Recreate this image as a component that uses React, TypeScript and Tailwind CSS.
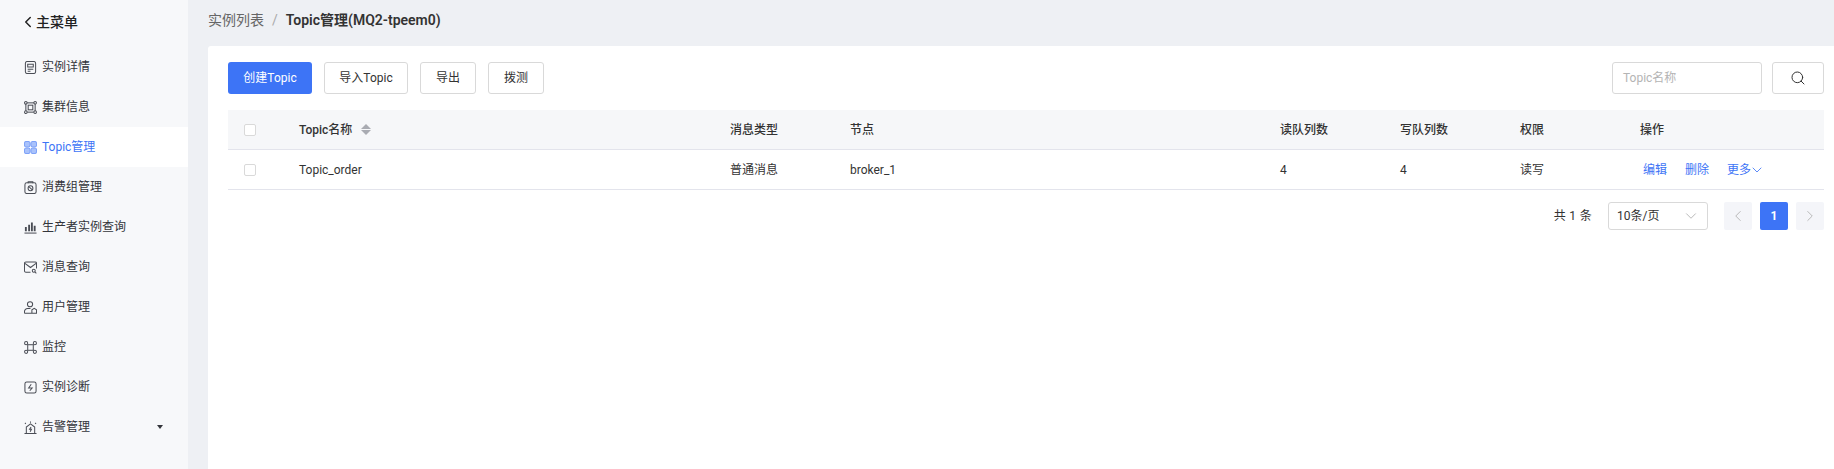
import { ChevronLeft, ChevronRight, ChevronDown, Search } from 'lucide-react';
import type { ReactNode } from 'react';

const FONT = "font-['Roboto','Noto_Sans_CJK_SC',sans-serif]";

function Ico({ children, color = '#4a4d55' }: { children: ReactNode; color?: string }) {
  return (
    <svg width="13" height="13" viewBox="0 0 14 14" fill="none" stroke={color} strokeWidth="1.1" className="shrink-0">
      {children}
    </svg>
  );
}

const menu: { label: string; icon: ReactNode; active?: boolean; caret?: boolean }[] = [
  {
    label: '实例详情',
    icon: (
      <Ico>
        <rect x="1.5" y="0.5" width="11" height="13" rx="2" />
        <path d="M4 3.500h6v3H4zM4 9h6M4 11h3" />
      </Ico>
    ),
  },
  {
    label: '集群信息',
    icon: (
      <Ico>
        <rect x="2" y="2" width="10" height="10" />
        <rect x="4.500" y="4.500" width="5" height="5" />
        <circle cx="2" cy="2" r="1.400" fill="#f7f8fa" />
        <circle cx="12" cy="2" r="1.400" fill="#f7f8fa" />
        <circle cx="2" cy="12" r="1.400" fill="#f7f8fa" />
        <circle cx="12" cy="12" r="1.400" fill="#f7f8fa" />
      </Ico>
    ),
  },
  {
    label: 'Topic管理',
    active: true,
    icon: (
      <Ico color="#7ea2f8">
        <rect x="0.5" y="0.5" width="6" height="6" rx="2" fill="#a9c2fb" />
        <rect x="7.5" y="0.5" width="6" height="6" rx="2" fill="#a9c2fb" />
        <rect x="0.5" y="7.5" width="6" height="6" rx="2" fill="#a9c2fb" />
        <rect x="7.5" y="7.5" width="6" height="6" rx="2" fill="#a9c2fb" />
      </Ico>
    ),
  },
  {
    label: '消费组管理',
    icon: (
      <Ico>
        <rect x="1" y="2" width="12" height="11.500" rx="2" />
        <path d="M4.500 2.500V.8h5v1.700" />
        <circle cx="7" cy="7.800" r="2.600" />
        <path d="M5.400 6.200l3.200 3.200" />
      </Ico>
    ),
  },
  {
    label: '生产者实例查询',
    icon: (
      <Ico>
        <path d="M0.500 13h13" />
        <path d="M2 11V6.500M5.500 11V4M8.500 11V1.500M11.500 11V5" strokeWidth="2" />
      </Ico>
    ),
  },
  {
    label: '消息查询',
    icon: (
      <Ico>
        <path d="M7 12H2a1.500 1.500 0 0 1-1.500-1.500v-8A1.500 1.500 0 0 1 2 1h10a1.500 1.500 0 0 1 1.500 1.500V8" />
        <path d="M1 2.500L7 7l6-4.500" />
        <circle cx="10.500" cy="10.500" r="1.600" />
        <path d="M11.700 11.700l1.600 1.600" />
      </Ico>
    ),
  },
  {
    label: '用户管理',
    icon: (
      <Ico>
        <circle cx="6.500" cy="3.500" r="2.800" />
        <path d="M0.500 13.200v-1.700a3.500 3.500 0 0 1 3.500-3.500h3" />
        <path d="M0.500 13.200h13V9.500l-2.500-1.700-2.500 1.700v3.700" />
      </Ico>
    ),
  },
  {
    label: '监控',
    icon: (
      <Ico>
        <rect x="4" y="4" width="6" height="6" />
        <circle cx="2.300" cy="2.300" r="1.700" />
        <circle cx="11.700" cy="2.300" r="1.700" />
        <circle cx="2.300" cy="11.700" r="1.700" />
        <circle cx="11.700" cy="11.700" r="1.700" />
      </Ico>
    ),
  },
  {
    label: '实例诊断',
    icon: (
      <Ico>
        <rect x="1" y="1" width="12" height="12" rx="2" />
        <path d="M7.800 3.500L5 7.500h3.800L6.200 10.500" />
      </Ico>
    ),
  },
  {
    label: '告警管理',
    caret: true,
    icon: (
      <Ico>
        <path d="M0.500 13.500h13" />
        <path d="M2.500 13V6.500L7 3l4.500 3.500V13" />
        <path d="M7 .5V2M1 2l1 1M13 2l-1 1" />
        <path d="M7.600 6.500L6 9h2l-1.400 2.500" />
      </Ico>
    ),
  },
];

function Btn({ children, className }: { children: ReactNode; className: string }) {
  return (
    <button className={`h-8 rounded-[3px] border border-[#d9d9d9] bg-white text-xs text-[#333] ${className}`}>
      {children}
    </button>
  );
}

export default function App() {
  return (
    <div className={`flex h-[469px] w-[1834px] overflow-hidden bg-[#eef0f4] ${FONT}`}>
      {/* Sidebar */}
      <aside className="w-[188px] shrink-0 bg-[#f7f8fa] text-xs text-[#33353b]">
        <div className="flex h-[47px] items-center pb-[3px] pl-5 text-sm font-medium text-[#222]">
          <ChevronLeft size={18} strokeWidth={2} className="-ml-px mr-[-1px]" />
          <span>主菜单</span>
        </div>
        {menu.map((item) => (
          <div
            key={item.label}
            className={`flex h-10 items-center gap-[5px] pl-6 ${item.active ? 'bg-white text-[#3d74f6]' : ''}`}
          >
            {item.icon}
            <span>{item.label}</span>
            {item.caret && (
              <span className="ml-auto mr-[25px] h-0 w-0 border-x-[3.500px] border-t-[4px] border-x-transparent border-t-[#33353b]" />
            )}
          </div>
        ))}
      </aside>

      {/* Main */}
      <main className="flex min-w-0 flex-1 flex-col pl-5">
        <div className="flex h-[46px] shrink-0 items-center pb-[7px] text-sm">
          <span className="text-[#666]">实例列表</span>
          <span className="mx-2 text-[#aaa]">/</span>
          <span className="font-semibold text-[#333]">Topic管理(MQ2-tpeem0)</span>
        </div>

        <div className="flex-1 rounded-tl-[3px] bg-white pl-5 pr-2.5 pt-4">
          {/* Toolbar */}
          <div className="flex items-center gap-3">
            <button className="h-8 w-[84px] rounded-[3px] bg-[#3d74f6] text-xs text-white">创建Topic</button>
            <Btn className="w-[84px]">导入Topic</Btn>
            <Btn className="w-14">导出</Btn>
            <Btn className="w-14">拨测</Btn>
            <div className="ml-auto flex h-8 w-[150px] items-center rounded-[3px] border border-[#d9d9d9] px-[10px] text-xs text-[#b4b4b4]">
              Topic名称
            </div>
            <div className="-ml-0.5 flex h-8 w-[52px] items-center justify-center rounded-[3px] border border-[#d9d9d9]">
              <Search size={16} strokeWidth={1.500} className="text-[#333]" />
            </div>
          </div>

          {/* Table */}
          <table className="mt-4 w-full table-fixed border-separate border-spacing-0 text-xs text-[#333]">
            <colgroup>
              <col className="w-[71px]" />
              <col className="w-[431px]" />
              <col className="w-[120px]" />
              <col className="w-[430px]" />
              <col className="w-[120px]" />
              <col className="w-[120px]" />
              <col className="w-[120px]" />
              <col />
            </colgroup>
            <thead>
              <tr className="h-10 bg-[#f6f7f9] text-left [&>th]:border-b [&>th]:border-[#e3e4ec] [&>th]:font-medium">
                <th className="pl-4">
                  <span className="block h-3 w-3 rounded-[2px] border border-[#d9d9d9] bg-white" />
                </th>
                <th>
                  <span className="flex items-center gap-[9px]">
                    Topic名称
                    <span className="flex flex-col gap-[1px]">
                      <span className="h-0 w-0 border-x-[5px] border-b-[5px] border-x-transparent border-b-[#a9abb2]" />
                      <span className="h-0 w-0 border-x-[5px] border-t-[5px] border-x-transparent border-t-[#a9abb2]" />
                    </span>
                  </span>
                </th>
                <th>消息类型</th>
                <th>节点</th>
                <th>读队列数</th>
                <th>写队列数</th>
                <th>权限</th>
                <th>操作</th>
              </tr>
            </thead>
            <tbody>
              <tr className="h-10 [&>td]:border-b [&>td]:border-[#e3e4ec]">
                <td className="pl-4">
                  <span className="block h-3 w-3 rounded-[2px] border border-[#d9d9d9] bg-white" />
                </td>
                <td>Topic_order</td>
                <td>普通消息</td>
                <td>broker_1</td>
                <td>4</td>
                <td>4</td>
                <td>读写</td>
                <td>
                  <span className="flex items-center pl-[3px] text-[#3d74f6]">
                    <span>编辑</span>
                    <span className="ml-[18px]">删除</span>
                    <span className="ml-[18px]">更多</span>
                    <ChevronDown size={16} strokeWidth={1.250} className="-ml-0.5" />
                  </span>
                </td>
              </tr>
            </tbody>
          </table>

          {/* Pagination */}
          <div className="mt-3 flex items-center justify-end text-xs text-[#333]">
            <span className="mr-4 tracking-[0.3px]">共 1 条</span>
            <div className="flex h-7 w-[100px] items-center justify-between rounded-[3px] border border-[#d9d9d9] pl-2 pr-[7px]">
              10条/页
              <ChevronDown size={18} strokeWidth={1.250} className="text-[#b4b4b4]" />
            </div>
            <div className="ml-4 flex h-7 w-7 items-center justify-center rounded-[2px] bg-[#f4f5f9]">
              <ChevronLeft size={18} strokeWidth={1.250} className="text-[#b4b4b4]" />
            </div>
            <div className="ml-2 flex h-7 w-7 items-center justify-center rounded-[2px] bg-[#3d74f6] font-bold text-white">
              1
            </div>
            <div className="ml-2 flex h-7 w-7 items-center justify-center rounded-[2px] bg-[#f4f5f9]">
              <ChevronRight size={18} strokeWidth={1.250} className="text-[#b4b4b4]" />
            </div>
          </div>
        </div>
      </main>
    </div>
  );
}
